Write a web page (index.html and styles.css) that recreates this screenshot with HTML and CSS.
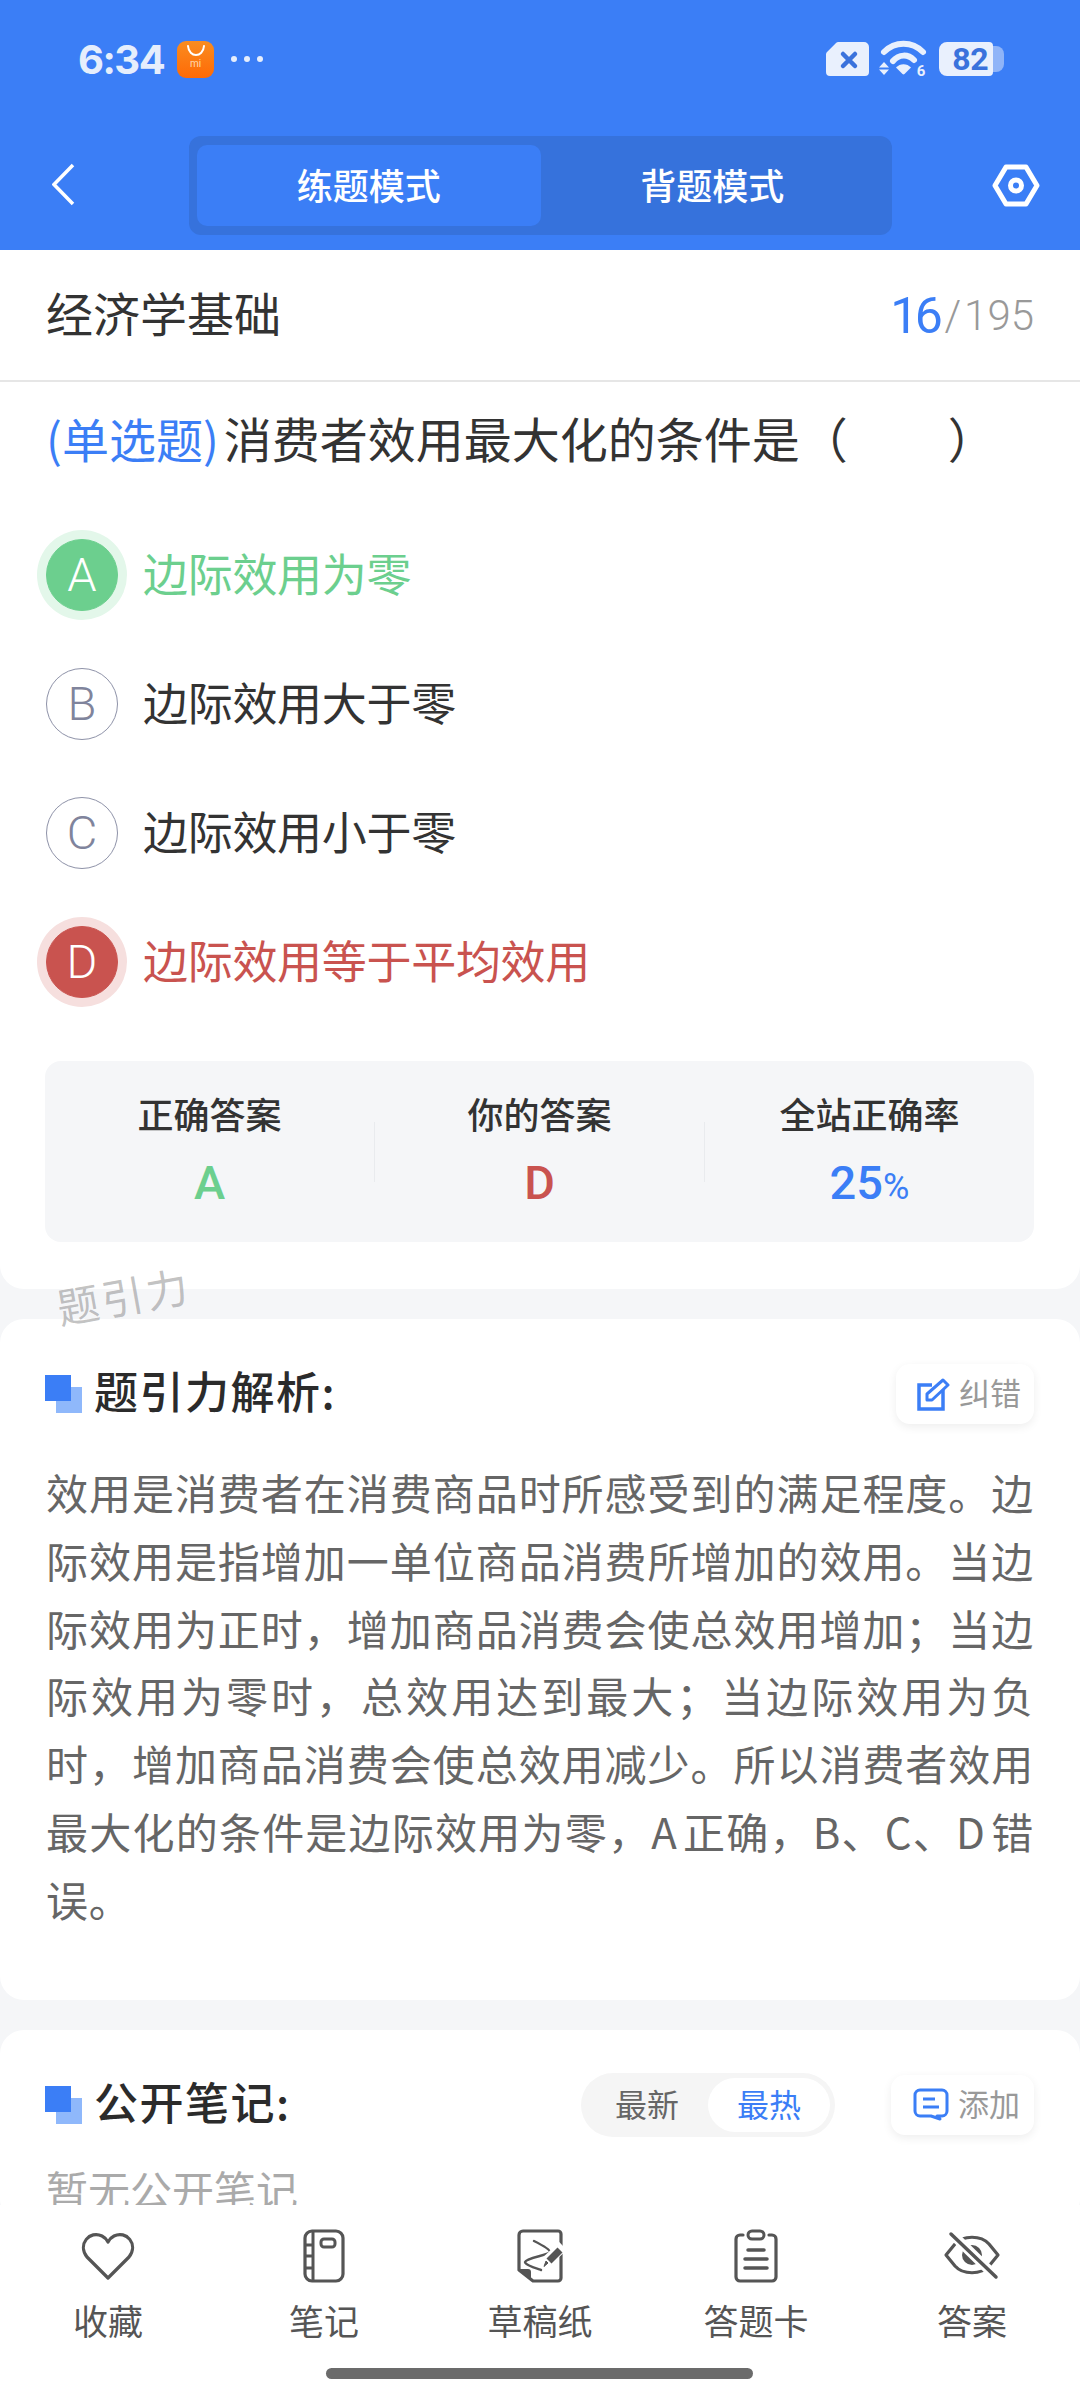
FILE: index.html
```html
<!DOCTYPE HTML>
<html lang="zh">
<head>
<meta charset="utf-8">
<title>练题模式</title>
<link rel="stylesheet" href="styles.css">
</head>
<body>
<div class="page">
  <header class="top">
    <div class="status">
      <span class="time">6:34</span>
      <span class="store">
        <svg width="24" height="14" viewBox="0 0 24 14"><path d="M4 1c1 12 15 12 16 0" fill="none" stroke="#fff" stroke-width="2" stroke-linecap="round"/></svg>
        <em>mi</em>
      </span>
      <span class="dots"><i></i><i></i><i></i></span>
      <span class="status-right">
        <svg class="sim" width="43" height="34" viewBox="0 0 43 34"><path d="M13 0H38a5 5 0 0 1 5 5V30a4 4 0 0 1-4 4H4a4 4 0 0 1-4-4V13a4 4 0 0 1 1-3L10 1a4 4 0 0 1 3-1Z" fill="#e9f0fd"/><path d="M17 12l12 12M29 12L17 24" stroke="#3a72dc" stroke-width="4.500" stroke-linecap="round"/></svg>
        <svg class="wifi" width="47" height="36" viewBox="0 0 47 36"><path d="M4 11C15 0 32 0 43 11" fill="none" stroke="#e9f0fd" stroke-width="6" stroke-linecap="round"/><path d="M13 20C19 13 28 13 34 19" fill="none" stroke="#e9f0fd" stroke-width="6" stroke-linecap="round"/><path d="M16 26.500C20 22 27 22 31 26.500L24.500 33a1.500 1.500 0 0 1-2 0Z" fill="#e9f0fd"/><path d="M4 21L9 26.500H-1ZM4 34L-1 28.500H9Z" fill="#e9f0fd"/><text x="41" y="35" class="wifi-6">6</text></svg>
        <span class="batt"><span class="batt-num">82</span></span>
      </span>
    </div>
    <nav class="bar">
      <svg class="back" width="23" height="43" viewBox="0 0 23 43"><path d="M21 2L2 21.500L21 41" fill="none" stroke="#fff" stroke-width="3.500"/></svg>
      <div class="seg">
        <a class="seg-item on">练题模式</a>
        <a class="seg-item">背题模式</a>
      </div>
      <svg class="gear" width="48" height="43" viewBox="0 0 48 43"><path d="M3 21.500L14 3H34L45 21.500L34 40H14Z" fill="none" stroke="#fff" stroke-width="5" stroke-linejoin="round"/><circle cx="24" cy="21.500" r="5.500" fill="none" stroke="#fff" stroke-width="5"/></svg>
    </nav>
  </header>

  <main class="main">
    <section class="card first">
      <div class="sub">
        <span class="sub-name">经济学基础</span>
        <span class="sub-count"><b>16</b><i>/</i>195</span>
      </div>
      <p class="ques"><span class="ques-type">(单选题)</span>消费者效用最大化的条件是（<span class="blank"></span>）</p>
      <ul class="opts">
        <li class="opt right"><span class="mark">A</span>边际效用为零</li>
        <li class="opt"><span class="mark">B</span>边际效用大于零</li>
        <li class="opt"><span class="mark">C</span>边际效用小于零</li>
        <li class="opt wrong"><span class="mark">D</span>边际效用等于平均效用</li>
      </ul>
      <div class="stats">
        <div class="stat"><span class="stat-label">正确答案</span><span class="stat-val green">A</span></div>
        <span class="stat-sep"></span>
        <div class="stat"><span class="stat-label">你的答案</span><span class="stat-val red">D</span></div>
        <span class="stat-sep"></span>
        <div class="stat"><span class="stat-label">全站正确率</span><span class="stat-val blue">25<small>%</small></span></div>
      </div>
    </section>
    <span class="mark-water">题引力</span>

    <section class="card">
      <div class="head">
        <h2 class="head-title">题引力解析:</h2>
        <a class="tool">
          <svg width="33" height="33" viewBox="0 0 33 33"><path d="M15 7H2V31H26V12" fill="none" stroke="#3b7ef6" stroke-width="3.500"/><path d="M10 22L10 16L26 2L31 7L15 22Z" fill="none" stroke="#3b7ef6" stroke-width="3" stroke-linejoin="round"/></svg>
          纠错
        </a>
      </div>
      <p class="expl">效用是消费者在消费商品时所感受到的满足程度。边际效用是指增加一单位商品消费所增加的效用。当边际效用为正时，增加商品消费会使总效用增加；当边际效用为零时，总效用达到最大；当边际效用为负时，增加商品消费会使总效用减少。所以消费者效用最大化的条件是边际效用为零，A 正确，B、C、D 错误。</p>
    </section>

    <section class="card">
      <div class="head">
        <h2 class="head-title">公开笔记:</h2>
        <div class="sort"><span>最新</span><span class="on">最热</span></div>
        <a class="tool add">
          <svg width="36" height="33" viewBox="0 0 36 33"><path d="M7 2H29a5 5 0 0 1 5 5V23a5 5 0 0 1-5 5H24L27 31L18 28H7a5 5 0 0 1-5-5V7a5 5 0 0 1 5-5Z" fill="none" stroke="#3b7ef6" stroke-width="3" stroke-linejoin="round"/><path d="M10 11H22M10 19H26" stroke="#3b7ef6" stroke-width="3"/></svg>
          添加
        </a>
      </div>
      <p class="empty">暂无公开笔记</p>
    </section>
  </main>

  <footer class="foot">
    <div class="tabs">
      <a class="tab">
        <svg width="56" height="54" viewBox="0 0 56 54"><path d="M28 49L7 28C-3 15 10 1 22 7C25 8.500 27 11 28 13C29 11 31 8.500 34 7C46 1 59 15 49 28Z" fill="none" stroke="#555" stroke-width="3.200" stroke-linejoin="round"/></svg>
        收藏
      </a>
      <a class="tab">
        <svg width="44" height="54" viewBox="0 0 44 54"><rect x="3" y="2" width="38" height="50" rx="7" fill="none" stroke="#555" stroke-width="3.200"/><path d="M11 2V52M3 16H11M3 27H11M3 39H11" fill="none" stroke="#555" stroke-width="3"/><rect x="19" y="10" width="14" height="8" rx="3" fill="none" stroke="#555" stroke-width="3"/></svg>
        笔记
      </a>
      <a class="tab">
        <svg width="46" height="54" viewBox="0 0 46 54"><path d="M6 2H41a3 3 0 0 1 3 3V49a3 3 0 0 1-3 3H16L2 41V6a4 4 0 0 1 4-4Z" fill="none" stroke="#555" stroke-width="3.200" stroke-linejoin="round"/><path d="M2 40H11a3 3 0 0 1 3 3V51Z" fill="#555"/><path d="M17 12C23 15 33 20 33 23C32 26 9 29 8 33C8 36 18 39 24 41" fill="none" stroke="#555" stroke-width="2.400" stroke-linecap="round"/><path d="M46 17L30 32" stroke="#fff" stroke-width="11"/><path d="M43 21L32 32" stroke="#555" stroke-width="7"/><path d="M31 34L27 37.500L29 32Z" fill="#555" stroke="#555"/></svg>
        草稿纸
      </a>
      <a class="tab">
        <svg width="46" height="54" viewBox="0 0 46 54"><path d="M10 6H7a4 4 0 0 0-4 4V48a4 4 0 0 0 4 4H39a4 4 0 0 0 4-4V10a4 4 0 0 0-4-4H36" fill="none" stroke="#555" stroke-width="3.200" stroke-linecap="round"/><rect x="15" y="2" width="16" height="8" rx="4" fill="none" stroke="#555" stroke-width="3"/><path d="M15 21H31M12 30H34M12 39H34" stroke="#555" stroke-width="3.500" stroke-linecap="round"/></svg>
        答题卡
      </a>
      <a class="tab">
        <svg width="58" height="54" viewBox="0 0 58 54"><path d="M3 26L12 15C20 6 38 6 46 15L55 26L46 37C38 46 20 46 12 37Z" fill="none" stroke="#555" stroke-width="3.200" stroke-linejoin="round"/><circle cx="29" cy="26" r="10" fill="#555"/><path d="M8 4L53 48" stroke="#fff" stroke-width="10"/><path d="M8 5L53 48" stroke="#555" stroke-width="3.500" stroke-linecap="round"/></svg>
        答案
      </a>
    </div>
    <div class="home"></div>
  </footer>
</div>
</body>
</html>
```

FILE: styles.css
```css
html, body {margin:0; padding:0;}
body {font-family:"Noto Sans CJK SC", "Noto Sans", sans-serif; color:#333;}
h2, p, ul {margin:0; padding:0;}
a {text-decoration:none; color:inherit;}
.page {width:1080px; height:2400px; overflow:hidden; display:flex; flex-direction:column; background:#f5f6f8;}

.top {height:250px; background:#3b7ef6; flex:none;}
.status {height:118px; display:flex; align-items:center; padding-left:78px; box-sizing:border-box;}
.time {font:700 40px Inter, sans-serif; color:#e6eefc; letter-spacing:-1.500px; width:99px;}
.store {width:37px; height:37px; border-radius:9px; background:linear-gradient(#f98c20, #ff6a06); display:flex; flex-direction:column; align-items:center; padding-top:4px; box-sizing:border-box;}
.store svg {display:block;}
.store em {font:normal 10px/10px Roboto, sans-serif; color:#ffd9b0;}
.dots {display:flex; gap:7px; margin-left:17px;}
.dots i {width:6px; height:6px; border-radius:50%; background:#e6eefc;}
.status-right {margin-left:auto; display:flex; align-items:center; padding-right:87px;}
.wifi {margin-left:11px; overflow:visible;}
.wifi-6 {font:700 15px Roboto, sans-serif; fill:#e9f0fd; text-anchor:middle;}
.batt {margin-left:12px; width:54px; height:34px; background:#e9f0fd; border-radius:8px 4px 4px 8px; position:relative; text-align:right; padding-right:5px; box-sizing:border-box;}
.batt:after {content:""; position:absolute; left:54px; top:4px; width:11px; height:26px; background:#8fb4f8; border-radius:0 8px 8px 0;}
.batt-num {font:700 32px/34px Roboto, sans-serif; color:#3a72dc; letter-spacing:-.5px;}

.bar {height:132px; display:flex; align-items:center; padding-left:52px; box-sizing:border-box;}
.back {flex:none;}
.seg {margin-left:114px; width:703px; height:99px; margin-top:3px; background:#3672dc; border-radius:12px; padding:9px 8px; box-sizing:border-box; display:flex;}
.seg-item {flex:1; font-size:36px; font-weight:500; line-height:78px; color:#fff; text-align:center; border-radius:10px;}
.seg-item.on {background:#3b7ef6;}
.gear {flex:none; margin-left:100px; margin-top:2px;}

.main {flex:1; min-height:0; overflow:hidden; position:relative; display:flex; flex-direction:column; gap:30px;}
.card {background:#fff; border-radius:24px; padding:45px 46px 0; flex:none;}
.card.first {padding:0 0 47px; border-radius:0 0 24px 24px;}

.sub {height:132px; border-bottom:2px solid #e6e6e6; padding:0 46px 7px; box-sizing:border-box; display:flex; align-items:center; justify-content:space-between; margin-bottom:-1px;}
.sub-name {font-size:47px; color:#333;}
.sub-count {font:300 42px Roboto, sans-serif; color:#999; display:flex; align-items:baseline; padding-top:2px;}
.sub-count b {font-weight:400; font-size:50px; letter-spacing:-3.500px; color:#3b7ef6; position:relative; top:3px;}
.sub-count i {margin:0 3px 0 5px; font-style:normal;}

.ques {font-size:48px; line-height:68px; padding:24px 46px 0; white-space:nowrap; margin-top:-3px;}
.ques-type {color:#3b7ef6; font-size:47px; margin-right:5px;}
.blank {display:inline-block; width:100px;}

.opts {list-style:none; margin-top:38px; padding:0 46px;}
.opt {height:129px; display:flex; align-items:center; font-size:45px; letter-spacing:-.3px; color:#333; padding-bottom:4px; box-sizing:border-box;}
.mark {width:72px; height:72px; border-radius:50%; border:1.500px solid #8e92a8; box-sizing:border-box; margin:4px 25px 0 0; display:flex; align-items:center; justify-content:center; font:300 47px Roboto, sans-serif; color:#80849c; letter-spacing:0;}
.right {color:#6ccf8e;}
.right .mark {background:#6ccf8e; border-color:#6ccf8e; color:#fff; box-shadow:0 0 0 9px #e3f7ea;}
.wrong {color:#c9534f;}
.wrong .mark {background:#c9534f; border-color:#c9534f; color:#fff; box-shadow:0 0 0 9px #f6dfde;}

.stats {margin:35px 46px 0 45px; height:181px; background:#f5f6f8; border-radius:16px; display:flex;}
.stat {flex:1; display:flex; flex-direction:column; align-items:center;}
.stat-label {font-size:36px; font-weight:500; line-height:50px; margin-top:27px; color:#333;}
.stat-val {font:500 47px/60px Roboto, sans-serif; margin-top:15px;}
.stat-val small {font-size:36px; font-weight:400;}
.green {color:#6ccf8e;}
.red {color:#c9534f;}
.blue {color:#3b7ef6;}
.stat-sep {flex:none; width:1px; height:60px; margin-top:61px; background:#e9ebee;}

.mark-water {position:absolute; left:56px; top:1020px; font-size:42px; line-height:50px; color:rgba(120,120,120,.45); transform:rotate(-10deg); letter-spacing:3px;}

.head {height:60px; display:flex; align-items:center; position:relative;}
.head-title {font-size:44px; font-weight:500; line-height:60px; color:#2b2b2b; letter-spacing:1.500px; padding-left:48px; position:relative; top:-4px;}
.head-title:before {content:""; position:absolute; left:10px; top:27px; width:26px; height:26px; background:#8fb8fb;}
.head-title:after {content:""; position:absolute; left:-1px; top:15px; width:26px; height:26px; background:#3b7ef6;}
.tool {margin-left:auto; height:60px; box-sizing:border-box; padding:0 13px 5px 21px; display:flex; align-items:center; gap:9px; font-size:31px; color:#999; background:#fff; border-radius:14px; box-shadow:0 3px 10px rgba(0,0,0,.07);}
.tool svg {margin-top:5px;}
.tool.add {padding-left:22px; padding-right:14px;}
.sort {margin-left:auto; width:254px; height:64px; box-sizing:border-box; padding:5px; background:#f5f5f5; border-radius:32px; display:flex; font-size:32px; line-height:50px; color:#666; justify-content:space-between;}
.sort span {width:122px; text-align:center;}
.sort .on {background:#fff; color:#3b7ef6; border-radius:27px; height:54px;}
.sort + .tool {margin-left:56px;}

.expl {margin-top:34px; padding-bottom:67px; font-size:42px; line-height:67.800px; letter-spacing:.7px; word-spacing:-5px; color:#666; text-align:justify;}
.empty {margin-top:20px; font-size:42px; line-height:68px; color:#aaa;}

.foot {flex:none; height:195px; background:#fff; padding-top:24px; box-sizing:border-box; position:relative;}
.tabs {display:flex;}
.tab {flex:1; display:flex; flex-direction:column; align-items:center; font-size:35px; line-height:50px; color:#555;}
.tab svg {display:block; height:54px; margin-bottom:12px;}
.home {position:absolute; left:326px; top:163px; width:427px; height:11px; border-radius:6px; background:#6b6b6b;}
```
